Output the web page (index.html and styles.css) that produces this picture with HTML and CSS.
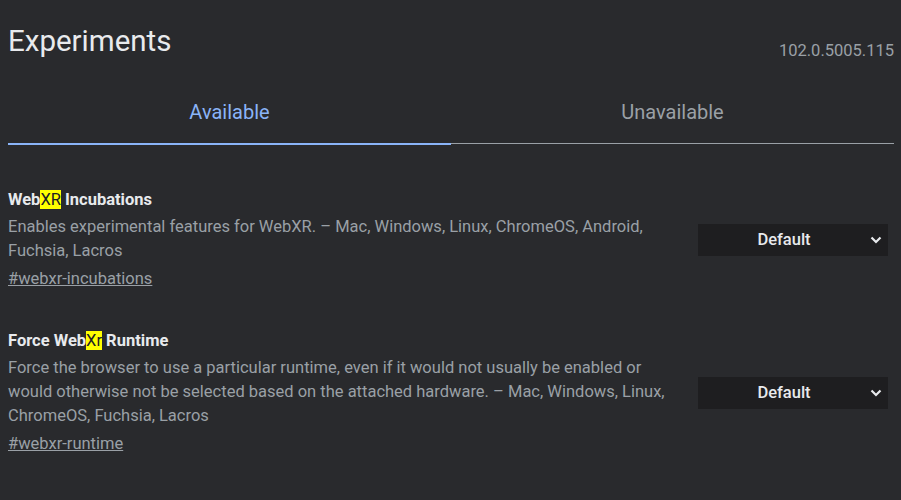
FILE: index.html
```html
<!DOCTYPE html>
<html>
<head>
<meta charset="utf-8">
<link rel="stylesheet" href="styles.css">
</head>
<body>
<div class="page">
  <header class="header">
    <h1 class="title">Experiments</h1>
    <div class="version">102.0.5005.115</div>
  </header>
  <nav class="tabs">
    <div class="tab active">Available</div>
    <div class="tab">Unavailable</div>
  </nav>
  <section class="experiment">
    <div class="info">
      <h2 class="name">Web<mark>XR</mark> Incubations</h2>
      <p class="desc">Enables experimental features for WebXR. – Mac, Windows, Linux, ChromeOS, Android, Fuchsia, Lacros</p>
      <a class="link" href="#webxr-incubations">#webxr-incubations</a>
    </div>
    <div class="select">
      <span class="select-label">Default</span>
      <svg class="chev" width="12" height="8" viewBox="0 0 12 8"><path d="M1.5 1.5 L6 6 L10.5 1.5" fill="none" stroke="#e8eaed" stroke-width="2.2"/></svg>
    </div>
  </section>
  <section class="experiment">
    <div class="info">
      <h2 class="name">Force Web<mark>Xr</mark> Runtime</h2>
      <p class="desc">Force the browser to use a particular runtime, even if it would not usually be enabled or would otherwise not be selected based on the attached hardware. – Mac, Windows, Linux, ChromeOS, Fuchsia, Lacros</p>
      <a class="link" href="#webxr-runtime">#webxr-runtime</a>
    </div>
    <div class="select">
      <span class="select-label">Default</span>
      <svg class="chev" width="12" height="8" viewBox="0 0 12 8"><path d="M1.5 1.5 L6 6 L10.5 1.5" fill="none" stroke="#e8eaed" stroke-width="2.2"/></svg>
    </div>
  </section>
</div>
</body>
</html>
```
FILE: styles.css
```css
html, body {
  margin: 0;
  padding: 0;
  background: #292a2d;
  font-family: Roboto, "Liberation Sans", sans-serif;
  color: #e8eaed;
}
.page {
  padding: 0 7px 0 8px;
}
.header {
  display: flex;
  justify-content: space-between;
  align-items: flex-end;
  height: 61px;
}
.title {
  margin: 0;
  font-size: 29.5px;
  font-weight: 400;
  line-height: 36px;
  padding-bottom: 2px;
  color: #e8eaed;
}
.version {
  font-size: 16.5px;
  color: #9aa0a6;
  line-height: 20px;
}
.tabs {
  display: flex;
  margin-top: 23px;
}
.tab {
  flex: 1;
  text-align: center;
  font-size: 20px;
  color: #9aa0a6;
  height: 60px;
  line-height: 56px;
  box-sizing: border-box;
  border-bottom: 1px solid #9aa0a6;
}
.tab.active {
  color: #8ab4f8;
  border-bottom: 2px solid #8ab4f8;
  margin-bottom: -1px;
  height: 61px;
}
.experiment {
  display: flex;
  align-items: center;
  justify-content: space-between;
}
.experiment:first-of-type {
  margin-top: 44px;
}
.experiment + .experiment {
  margin-top: 38px;
}
.info {
  width: 670px;
}
.name {
  margin: 0 0 3px;
  font-size: 16.5px;
  font-weight: 700;
  line-height: 24px;
  color: #e8eaed;
}
mark {
  background: #ffff00;
  color: #202124;
  font-weight: 400;
}
.desc {
  margin: 0;
  font-size: 16.5px;
  line-height: 24px;
  color: #9aa0a6;
}
.link {
  display: inline-block;
  margin-top: 4px;
  font-size: 16.5px;
  line-height: 24px;
  color: #9aa0a6;
  text-decoration: underline;
}
.select {
  width: 190px;
  height: 32px;
  margin-right: 6px;
  background: #1e1e20;
  display: flex;
  align-items: center;
  justify-content: center;
  padding-right: 18px;
  position: relative;
  box-sizing: border-box;
}
.select-label {
  font-size: 16.5px;
  font-weight: 500;
  color: #e8eaed;
}
.chev {
  position: absolute;
  right: 6px;
  top: 12px;
}
```
